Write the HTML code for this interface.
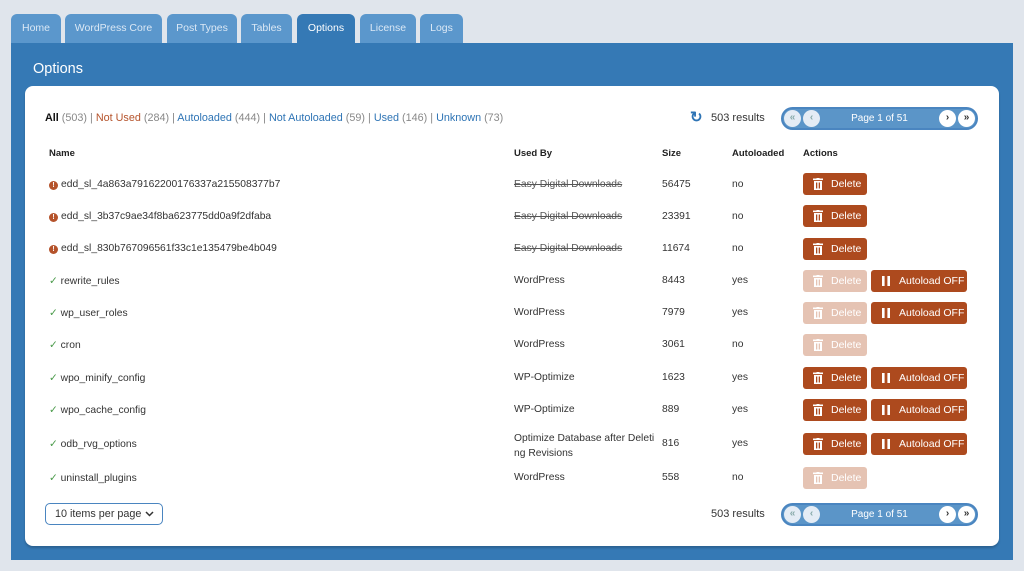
<!DOCTYPE html>
<html><head><meta charset="utf-8"><style>
*{box-sizing:border-box;margin:0;padding:0}
body{width:1024px;height:571px;background:#e0e5ec;font-family:"Liberation Sans",sans-serif;position:relative;overflow:hidden;color:#333;font-size:10.3px}
.tab{position:absolute;top:14px;height:29px;background:#5b97cc;border-radius:6px 6px 0 0;color:#dbe8f5;font-size:10.5px;line-height:29px;text-align:center}
.tab.a{background:#3579b5;color:#fff}
#panel{position:absolute;left:11px;top:43px;width:1002px;height:517px;background:#3579b5}
#title{position:absolute;left:33px;top:61px;color:#fff;font-size:14.5px}
#card{position:absolute;left:25px;top:86px;width:974px;height:460px;background:#fff;border-radius:8px;box-shadow:0 2px 2px rgba(0,0,0,.2)}
.t{position:absolute;white-space:nowrap}
.g{color:#888}.r{color:#b5532b}.b{color:#2e74b5}
.h{font-weight:bold;color:#222;font-size:9.5px}
.btn{position:absolute;height:22px;border-radius:3px;background:#ad4a1e;color:#fff;font-size:10.5px;display:flex;align-items:center}
.btn.f{background:#e5c3b3}
.del{width:64px;left:803px}
.ao{width:96px;left:871px}
.ic{width:10px;height:12px;margin-left:10px;margin-right:8px;flex:none}
.pg{position:absolute;left:781px;width:197px;height:23px;border-radius:12px;background:#5b95c8;border:2px solid #4a85c0}
.c{position:absolute;top:1px;width:17px;height:17px;border-radius:50%;background:#fff;color:#333;font-size:10px;line-height:16px;text-align:center;font-weight:bold}
.c.f{background:#e4ecf5;color:#8aa}
.pt{position:absolute;left:0;right:0;text-align:center;color:#fff;line-height:19px;font-size:10px}
.ex{display:inline-block;width:9px;height:9px;border-radius:50%;background:#b5532b;color:#fff;font-size:7px;line-height:9px;text-align:center;font-weight:bold;margin-right:3px;vertical-align:0px}
.ck{color:#4a9a4a;margin-right:3px}
s{color:#555}
</style></head><body>
<div class="tab" style="left:11px;width:50px">Home</div>
<div class="tab" style="left:65px;width:97px">WordPress Core</div>
<div class="tab" style="left:167px;width:70px">Post Types</div>
<div class="tab" style="left:241px;width:51px">Tables</div>
<div class="tab a" style="left:297px;width:58px">Options</div>
<div class="tab" style="left:360px;width:56px">License</div>
<div class="tab" style="left:420px;width:43px">Logs</div>
<div id="panel"></div>
<div id="title">Options</div>
<div id="card"></div>
<div class="t" style="left:45px;top:112px;font-size:10.8px"><b style="color:#111">All</b> <span class="g">(503)</span> <span class="g">|</span> <span class="r">Not Used</span> <span class="g">(284)</span> <span class="g">|</span> <span class="b">Autoloaded</span> <span class="g">(444)</span> <span class="g">|</span> <span class="b">Not Autoloaded</span> <span class="g">(59)</span> <span class="g">|</span> <span class="b">Used</span> <span class="g">(146)</span> <span class="g">|</span> <span class="b">Unknown</span> <span class="g">(73)</span></div>
<div class="t b" style="left:690px;top:108px;font-size:15px;font-weight:bold">↻</div>
<div class="t" style="left:711px;top:112px;font-size:11px">503 results</div>
<div class="pg" style="top:107px"><div class="c f" style="left:1px">«</div><div class="c f" style="left:20px">‹</div><div class="pt">Page 1 of 51</div><div class="c" style="left:156px">›</div><div class="c" style="left:175px">»</div></div>
<div class="t h" style="left:49px;top:148px">Name</div>
<div class="t h" style="left:514px;top:148px">Used By</div>
<div class="t h" style="left:662px;top:148px">Size</div>
<div class="t h" style="left:732px;top:148px">Autoloaded</div>
<div class="t h" style="left:803px;top:148px">Actions</div>

<div class="t" style="left:49px;top:179px"><span class="ex">!</span>edd_sl_4a863a79162200176337a215508377b7</div>
<div class="t" style="left:514px;top:179px"><s>Easy Digital Downloads</s></div><div class="t" style="left:662px;top:179px">56475</div><div class="t" style="left:732px;top:179px">no</div>
<div class="t" style="left:49px;top:211px"><span class="ex">!</span>edd_sl_3b37c9ae34f8ba623775dd0a9f2dfaba</div>
<div class="t" style="left:514px;top:211px"><s>Easy Digital Downloads</s></div><div class="t" style="left:662px;top:211px">23391</div><div class="t" style="left:732px;top:211px">no</div>
<div class="t" style="left:49px;top:243px"><span class="ex">!</span>edd_sl_830b767096561f33c1e135479be4b049</div>
<div class="t" style="left:514px;top:243px"><s>Easy Digital Downloads</s></div><div class="t" style="left:662px;top:243px">11674</div><div class="t" style="left:732px;top:243px">no</div>
<div class="t" style="left:49px;top:275px"><span class="ck">✓</span>rewrite_rules</div><div class="t" style="left:514px;top:275px">WordPress</div><div class="t" style="left:662px;top:275px">8443</div><div class="t" style="left:732px;top:275px">yes</div>
<div class="t" style="left:49px;top:307px"><span class="ck">✓</span>wp_user_roles</div><div class="t" style="left:514px;top:307px">WordPress</div><div class="t" style="left:662px;top:307px">7979</div><div class="t" style="left:732px;top:307px">yes</div>
<div class="t" style="left:49px;top:339px"><span class="ck">✓</span>cron</div><div class="t" style="left:514px;top:339px">WordPress</div><div class="t" style="left:662px;top:339px">3061</div><div class="t" style="left:732px;top:339px">no</div>
<div class="t" style="left:49px;top:372px"><span class="ck">✓</span>wpo_minify_config</div><div class="t" style="left:514px;top:372px">WP-Optimize</div><div class="t" style="left:662px;top:372px">1623</div><div class="t" style="left:732px;top:372px">yes</div>
<div class="t" style="left:49px;top:404px"><span class="ck">✓</span>wpo_cache_config</div><div class="t" style="left:514px;top:404px">WP-Optimize</div><div class="t" style="left:662px;top:404px">889</div><div class="t" style="left:732px;top:404px">yes</div>
<div class="t" style="left:49px;top:438px"><span class="ck">✓</span>odb_rvg_options</div><div class="t" style="left:514px;top:431px;line-height:15px">Optimize Database after Deleti<br>ng Revisions</div><div class="t" style="left:662px;top:438px">816</div><div class="t" style="left:732px;top:438px">yes</div>
<div class="t" style="left:49px;top:472px"><span class="ck">✓</span>uninstall_plugins</div><div class="t" style="left:514px;top:472px">WordPress</div><div class="t" style="left:662px;top:472px">558</div><div class="t" style="left:732px;top:472px">no</div>

<svg width="0" height="0" style="position:absolute"><defs><symbol id="tr" viewBox="0 0 10 12"><rect x="0" y="0.5" width="10" height="1.6" fill="#fff"/><rect x="3.5" y="0" width="3" height="1" fill="#fff"/><path d="M1 3h8v9H1z M3 4.5v6h1.3v-6z M5.7 4.5v6H7v-6z" fill="#fff" fill-rule="evenodd"/></symbol><symbol id="pa" viewBox="0 0 10 12"><rect x="1" y="1" width="2.6" height="10" fill="#fff"/><rect x="6.4" y="1" width="2.6" height="10" fill="#fff"/></symbol></defs></svg>

<div class="btn del" style="top:173px"><svg class="ic"><use href="#tr"/></svg>Delete</div>
<div class="btn del" style="top:205px"><svg class="ic"><use href="#tr"/></svg>Delete</div>
<div class="btn del" style="top:238px"><svg class="ic"><use href="#tr"/></svg>Delete</div>
<div class="btn del f" style="top:270px"><svg class="ic"><use href="#tr"/></svg>Delete</div><div class="btn ao" style="top:270px"><svg class="ic"><use href="#pa"/></svg>Autoload OFF</div>
<div class="btn del f" style="top:302px"><svg class="ic"><use href="#tr"/></svg>Delete</div><div class="btn ao" style="top:302px"><svg class="ic"><use href="#pa"/></svg>Autoload OFF</div>
<div class="btn del f" style="top:334px"><svg class="ic"><use href="#tr"/></svg>Delete</div>
<div class="btn del" style="top:367px"><svg class="ic"><use href="#tr"/></svg>Delete</div><div class="btn ao" style="top:367px"><svg class="ic"><use href="#pa"/></svg>Autoload OFF</div>
<div class="btn del" style="top:399px"><svg class="ic"><use href="#tr"/></svg>Delete</div><div class="btn ao" style="top:399px"><svg class="ic"><use href="#pa"/></svg>Autoload OFF</div>
<div class="btn del" style="top:433px"><svg class="ic"><use href="#tr"/></svg>Delete</div><div class="btn ao" style="top:433px"><svg class="ic"><use href="#pa"/></svg>Autoload OFF</div>
<div class="btn del f" style="top:467px"><svg class="ic"><use href="#tr"/></svg>Delete</div>

<div class="t" style="left:45px;top:503px;width:118px;height:22px;border:1.5px solid #4a85c0;border-radius:5px;display:flex;align-items:center;padding-left:9px;font-size:10.8px">10 items per page <svg width="9" height="6" style="margin-left:4px" viewBox="0 0 9 6"><path d="M1 1l3.5 3.5L8 1" stroke="#333" stroke-width="1.5" fill="none"/></svg></div>
<div class="t" style="left:711px;top:508px;font-size:11px">503 results</div>
<div class="pg" style="top:503px"><div class="c f" style="left:1px">«</div><div class="c f" style="left:20px">‹</div><div class="pt">Page 1 of 51</div><div class="c" style="left:156px">›</div><div class="c" style="left:175px">»</div></div>
</body></html>
